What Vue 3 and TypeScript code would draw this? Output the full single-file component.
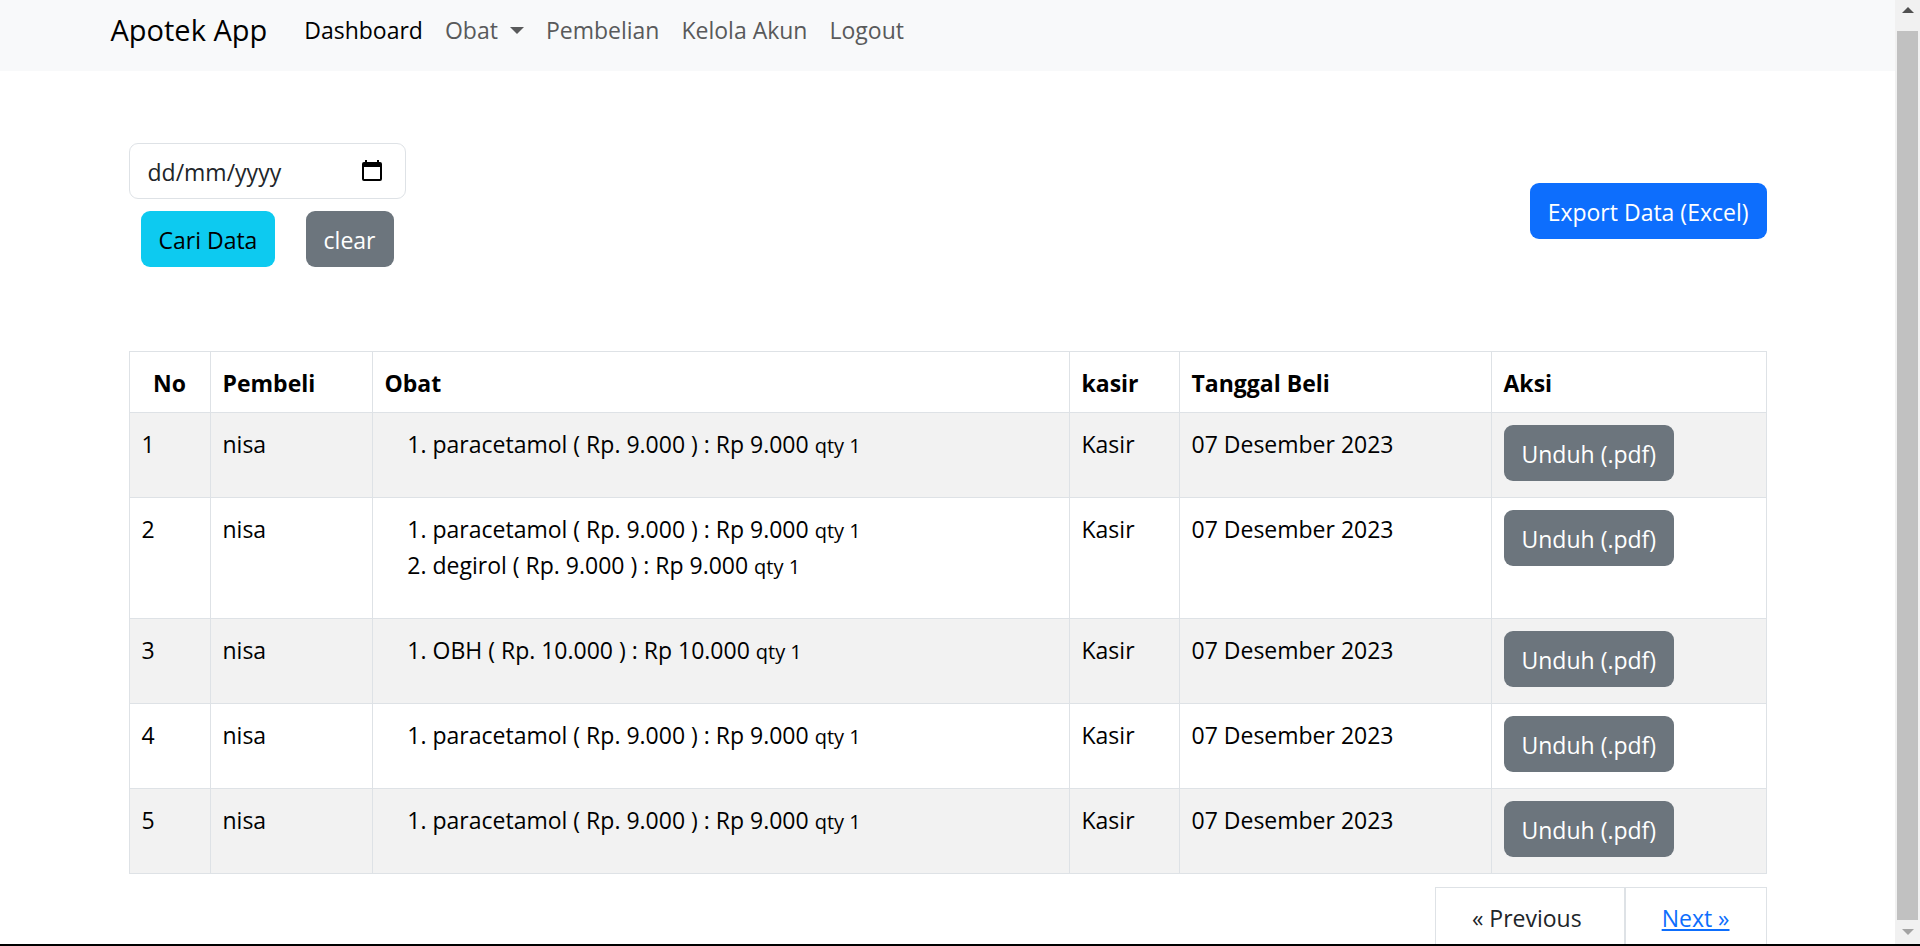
<script setup lang="ts">
import { ref } from 'vue'

interface Item {
  name: string
  price: string
  total: string
  qty: number
}

interface Order {
  buyer: string
  items: Item[]
  cashier: string
  date: string
}

const paracetamol: Item = { name: 'paracetamol', price: '9.000', total: '9.000', qty: 1 }
const degirol: Item = { name: 'degirol', price: '9.000', total: '9.000', qty: 1 }
const obh: Item = { name: 'OBH', price: '10.000', total: '10.000', qty: 1 }

const order = (items: Item[]): Order => ({
  buyer: 'nisa',
  items,
  cashier: 'Kasir',
  date: '07 Desember 2023',
})

const orders: Order[] = [
  order([paracetamol]),
  order([paracetamol, degirol]),
  order([obh]),
  order([paracetamol]),
  order([paracetamol]),
]

const date = ref('')
</script>

<template>
  <div class="window">
    <div class="viewport">
      <div class="page">
        <nav class="navbar">
          <div class="container navbar-inner">
            <a class="brand" href="#">Apotek App</a>
            <a class="nav-link active" href="#">Dashboard</a>
            <button class="nav-link dropdown" type="button" aria-haspopup="true">
              Obat
              <svg class="caret" viewBox="0 0 14 7" aria-hidden="true"><path d="M0 0h14L7 7z" /></svg>
            </button>
            <a class="nav-link" href="#">Pembelian</a>
            <a class="nav-link" href="#">Kelola Akun</a>
            <a class="nav-link" href="#">Logout</a>
          </div>
        </nav>

        <main class="container">
          <div class="content">
            <div class="toolbar">
              <form class="filter" @submit.prevent>
                <div class="date-field">
                  <input v-model="date" type="text" placeholder="dd/mm/yyyy" aria-label="Tanggal" />
                  <button class="picker" type="button" aria-label="Pilih tanggal">
                    <svg viewBox="0 0 20 22" aria-hidden="true">
                      <path
                        fill-rule="evenodd"
                        d="M3 0h2v2h10V0h2v2h1a2 2 0 0 1 2 2v15a2 2 0 0 1-2 2H2a2 2 0 0 1-2-2V4a2 2 0 0 1 2-2h1zM2 7v12h16V7z"
                      />
                    </svg>
                  </button>
                </div>
                <div class="filter-actions">
                  <button class="btn info" type="submit">Cari Data</button>
                  <button class="btn secondary" type="button" @click="date = ''">clear</button>
                </div>
              </form>
              <a class="btn primary" href="#">Export Data (Excel)</a>
            </div>

            <table class="orders">
              <colgroup>
                <col class="col-no" />
                <col class="col-buyer" />
                <col />
                <col class="col-cashier" />
                <col class="col-date" />
                <col class="col-action" />
              </colgroup>
              <thead>
                <tr>
                  <th class="center">No</th>
                  <th>Pembeli</th>
                  <th>Obat</th>
                  <th>kasir</th>
                  <th>Tanggal Beli</th>
                  <th>Aksi</th>
                </tr>
              </thead>
              <tbody>
                <tr v-for="(o, i) in orders" :key="i">
                  <td>{{ i + 1 }}</td>
                  <td>{{ o.buyer }}</td>
                  <td>
                    <ol>
                      <li v-for="item in o.items" :key="item.name">
                        {{ item.name }} ( Rp. {{ item.price }} ) : Rp {{ item.total }}
                        <small>qty {{ item.qty }}</small>
                      </li>
                    </ol>
                  </td>
                  <td>{{ o.cashier }}</td>
                  <td>{{ o.date }}</td>
                  <td class="action"><a class="btn secondary" href="#">Unduh (.pdf)</a></td>
                </tr>
              </tbody>
            </table>

            <div class="pagination">
              <span class="page-item previous">« Previous</span>
              <span class="page-item"><a href="#">Next »</a></span>
            </div>
          </div>
        </main>
      </div>

      <div class="scrollbar" aria-hidden="true">
        <svg class="arrow up" viewBox="0 0 12 6"><path d="M6 0l6 6H0z" /></svg>
        <div class="thumb"></div>
        <svg class="arrow down" viewBox="0 0 12 6"><path d="M0 0h12L6 6z" /></svg>
      </div>
    </div>
  </div>
</template>

<style>
body {
  margin: 0;
}
</style>

<style scoped>
.window {
  box-sizing: border-box;
  height: 100vh;
  border-bottom: 2px solid #000;
  background: #fff;
  color: #212529;
  font-family: 'Segoe UI', 'Open Sans', 'Noto Sans', sans-serif;
  font-size: 23px;
  line-height: 36px;
}

.viewport {
  display: flex;
  height: 100%;
  overflow: hidden;
}

.page {
  flex: 1;
  min-width: 0;
  overflow: hidden;
}

button,
input {
  font: inherit;
}

.container {
  box-sizing: border-box;
  max-width: 1710px;
  margin: 0 auto;
  padding: 0 18px;
}

.navbar {
  background: #f8f9fa;
}

.navbar-inner {
  display: flex;
  align-items: center;
  padding-bottom: 11px;
}

.brand {
  margin-right: 26px;
  color: #000;
  font-size: 29px;
  line-height: 60px;
  text-decoration: none;
}

.nav-link {
  padding: 0 11px;
  border: 0;
  background: none;
  color: #595a5b;
  text-decoration: none;
}

.nav-link.active {
  color: #000;
}

.dropdown {
  display: flex;
  align-items: center;
  gap: 12px;
}

.caret {
  width: 14px;
  height: 7px;
  fill: currentColor;
}

.content {
  padding: 72px 18px 0;
}

.toolbar {
  display: flex;
  align-items: center;
  justify-content: space-between;
  margin-bottom: 72px;
}

.filter {
  width: 277px;
}

.date-field {
  display: flex;
  align-items: center;
  box-sizing: border-box;
  height: 56px;
  padding: 0 23px 0 18px;
  border: 1px solid #dee2e6;
  border-radius: 9px;
}

.date-field input {
  flex: 1;
  min-width: 0;
  padding: 2px 0 0;
  border: 0;
  outline: 0;
  background: none;
  color: #212529;
}

.date-field input::placeholder {
  color: #212529;
  opacity: 1;
}

.picker {
  display: flex;
  padding: 0;
  border: 0;
  background: none;
}

.picker svg {
  width: 20px;
  height: 22px;
}

.filter-actions {
  display: flex;
  justify-content: space-between;
  padding: 12px;
}

.btn {
  display: inline-block;
  box-sizing: border-box;
  padding: 11px 18px 9px;
  border: 0;
  border-radius: 9px;
  color: #fff;
  text-decoration: none;
  white-space: nowrap;
}

.primary {
  background: #0d6efd;
}

.secondary {
  background: #6c757d;
}

.info {
  background: #0dcaf0;
  color: #000;
}

.orders {
  width: 100%;
  table-layout: fixed;
  border-collapse: collapse;
  color: #000;
}

.col-no {
  width: 81px;
}

.col-buyer {
  width: 162px;
}

.col-cashier {
  width: 110px;
}

.col-date {
  width: 312px;
}

.col-action {
  width: 275px;
}

.orders th,
.orders td {
  padding: 13px 12px 11px;
  border: 1px solid #dee2e6;
  text-align: left;
  vertical-align: top;
}

.orders th.center {
  text-align: center;
}

.orders td.action {
  padding: 12px;
}

.orders tbody tr:nth-child(odd) {
  background: #f2f2f2;
}

.orders ol {
  margin: 0 0 24px;
  padding-left: 48px;
}

.orders small {
  font-size: 20px;
  line-height: 20px;
}

.pagination {
  display: flex;
  justify-content: flex-end;
  margin-top: 13px;
}

.page-item {
  padding: 12px 36px;
  border: 1px solid #dee2e6;
}

.page-item.previous {
  padding-right: 42px;
}

.page-item a {
  color: #0d6efd;
}

.scrollbar {
  display: flex;
  flex-direction: column;
  align-items: center;
  box-sizing: border-box;
  width: 25px;
  padding: 7px 2px 9px;
  background: #f1f1f1;
}

.thumb {
  flex: 1;
  align-self: stretch;
  margin: 18px 0 9px;
  background: #c1c1c1;
}

.arrow {
  width: 12px;
  height: 6px;
}

.up {
  fill: #505050;
}

.down {
  fill: #a3a3a3;
}
</style>
